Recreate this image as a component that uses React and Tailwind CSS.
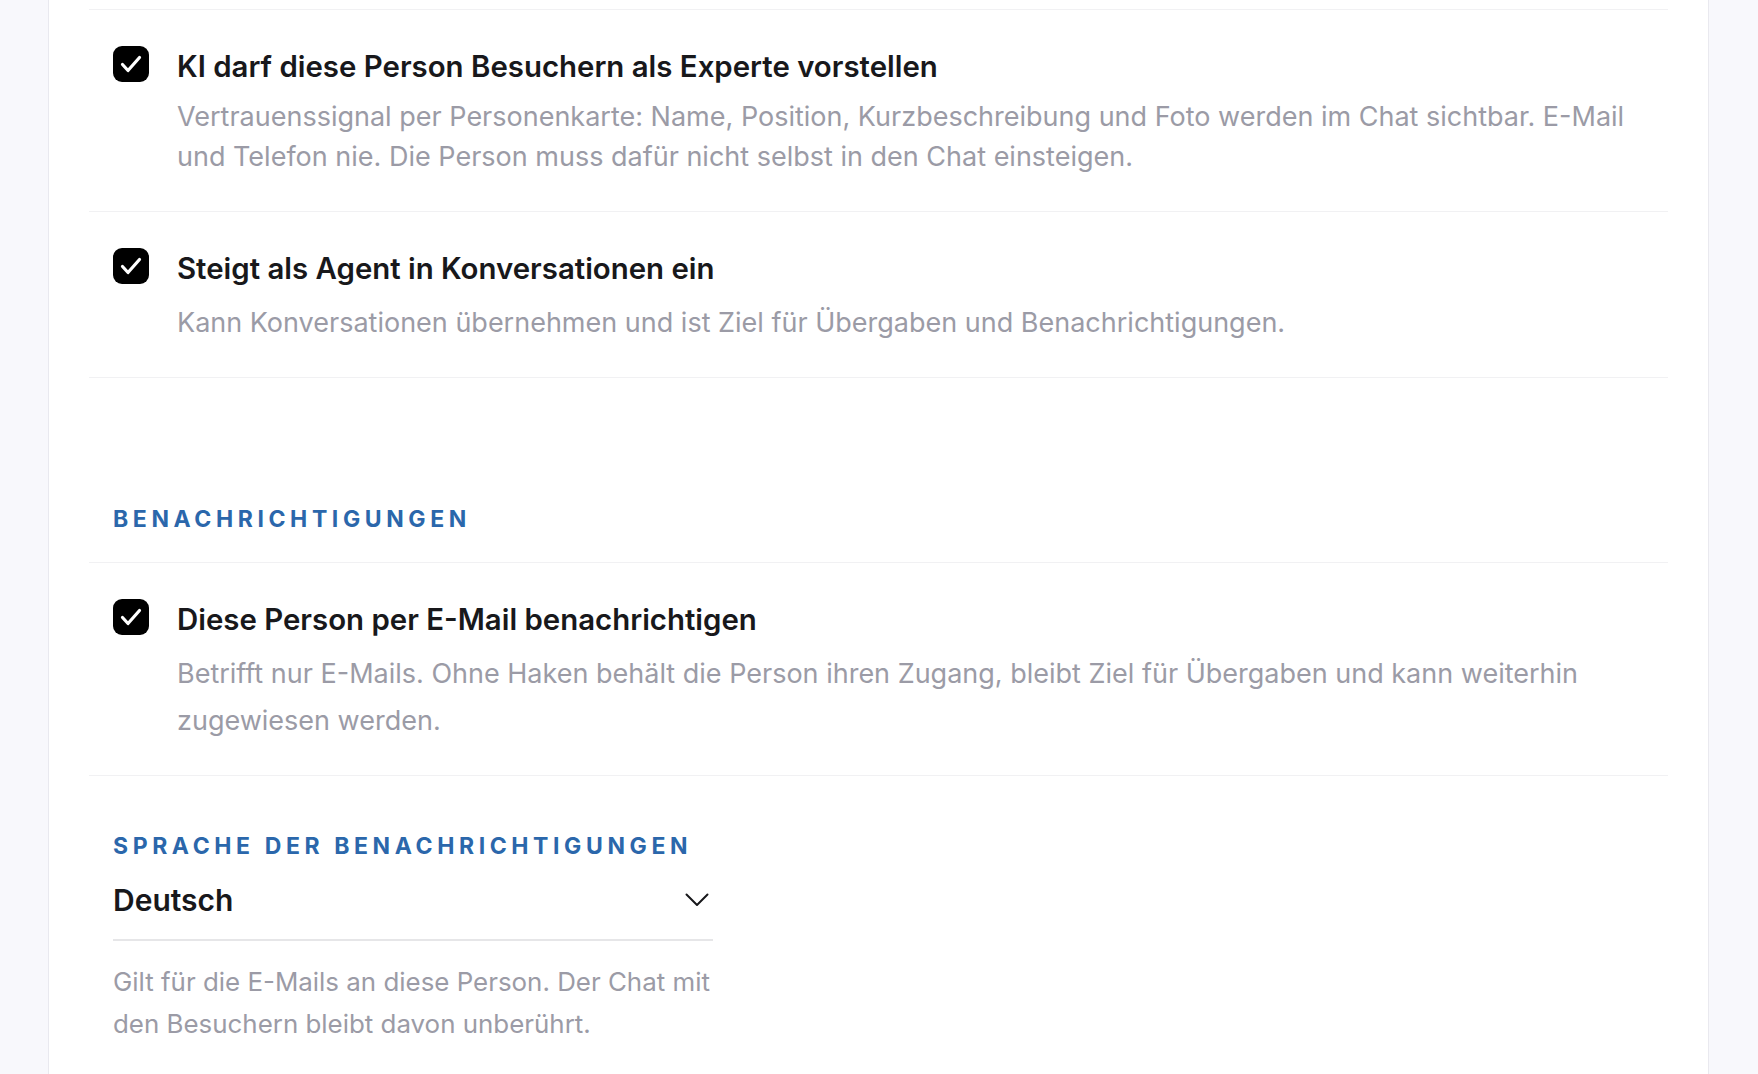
import { useState } from "react";

const rows = [
  {
    id: "expert",
    title: "KI darf diese Person Besuchern als Experte vorstellen",
    text: "Vertrauenssignal per Personenkarte: Name, Position, Kurzbeschreibung und Foto werden im Chat sichtbar. E-Mail und Telefon nie. Die Person muss dafür nicht selbst in den Chat einsteigen.",
    tight: true,
  },
  {
    id: "agent",
    title: "Steigt als Agent in Konversationen ein",
    text: "Kann Konversationen übernehmen und ist Ziel für Übergaben und Benachrichtigungen.",
  },
];

export default function App() {
  const [checked, setChecked] = useState({ expert: true, agent: true, email: true });
  const toggle = (id) => setChecked((c) => ({ ...c, [id]: !c[id] }));

  return (
    <div className="min-h-screen bg-[#f8f8fc] font-['Inter','Noto_Sans',sans-serif] antialiased">
      <div className="ml-[48px] w-[1661px] min-h-screen border-x border-[#e9e9ef] bg-white px-10 pt-[9px] pb-24">
        <div className="border-t border-[#f1f1f3]">
          {rows.map((r) => (
            <OptionRow
              key={r.id}
              title={r.title}
              text={r.text}
              tight={r.tight}
              checked={checked[r.id]}
              onToggle={() => toggle(r.id)}
            />
          ))}
        </div>

        {/* Notifications */}
        <div className="px-6 pt-[127px] pb-[29px] border-b border-[#f1f1f3]">
          <SectionLabel>Benachrichtigungen</SectionLabel>
        </div>
        <OptionRow
          title="Diese Person per E-Mail benachrichtigen"
          text="Betrifft nur E-Mails. Ohne Haken behält die Person ihren Zugang, bleibt Ziel für Übergaben und kann weiterhin zugewiesen werden."
          checked={checked.email}
          onToggle={() => toggle("email")}
        />

        {/* Language select */}
        <div className="px-6 pt-[56px]">
          <SectionLabel>Sprache der Benachrichtigungen</SectionLabel>
          <div className="w-[600px] mt-[20px]">
            <button className="w-full flex items-center justify-between pb-[19px] border-b-2 border-[#e6e6e8] text-left">
              <span className="text-[30px] leading-10 font-semibold text-[#18181b]">Deutsch</span>
              <svg width="24" height="14" viewBox="0 0 24 14" fill="none" className="mr-[4px]">
                <polyline
                  points="1.5,1.5 12,12 22.5,1.5"
                  stroke="#18181b"
                  strokeWidth="2"
                  strokeLinecap="round"
                  strokeLinejoin="round"
                />
              </svg>
            </button>
            <p className="mt-5 w-[608px] text-[25.9px] leading-[42px] text-[#9b9ba6]">
              Gilt für die E-Mails an diese Person. Der Chat mit den Besuchern bleibt davon unberührt.
            </p>
          </div>
        </div>
      </div>
    </div>
  );
}

function SectionLabel({ children }) {
  return (
    <h2 className="text-[23px] leading-7 font-bold uppercase tracking-[0.2em] text-[#2b67ab]">
      {children}
    </h2>
  );
}

function OptionRow({ title, text, checked, onToggle, tight }) {
  return (
    <div
      className={[
        "flex gap-7 px-6 pt-9 border-b border-[#f1f1f3]",
        tight ? "pb-[34px]" : "pb-[31px]",
      ].join(" ")}
    >
      <Checkbox checked={checked} onToggle={onToggle} />
      <div className="flex-1 min-w-0 pt-[3px]">
        <div className="text-[29.4px] leading-9 font-semibold text-[#18181b]">{title}</div>
        <p
          className={[
            "mt-3 text-[27px] text-[#9b9ba6]",
            tight ? "leading-10" : "leading-[47px]",
          ].join(" ")}
        >
          {text}
        </p>
      </div>
    </div>
  );
}

function Checkbox({ checked, onToggle }) {
  return (
    <button
      onClick={onToggle}
      aria-pressed={checked}
      className={[
        "shrink-0 w-9 h-9 rounded-[9px] flex items-center justify-center",
        checked ? "bg-black" : "bg-white border-2 border-[#c9c9d1]",
      ].join(" ")}
    >
      {checked && (
        <svg width="36" height="36" viewBox="0 0 36 36" fill="none">
          <polyline
            points="9.5,18.5 15,24.5 26.5,11.5"
            stroke="white"
            strokeWidth="3.2"
            strokeLinecap="round"
            strokeLinejoin="round"
          />
        </svg>
      )}
    </button>
  );
}
